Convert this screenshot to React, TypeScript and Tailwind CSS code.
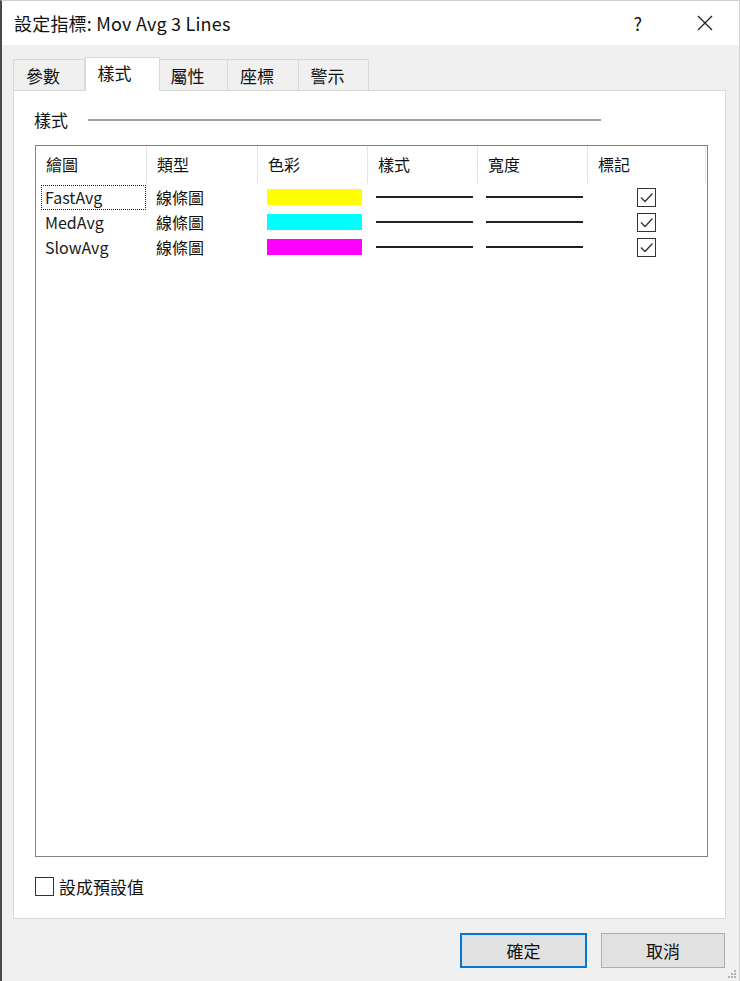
const FONT = "font-['Noto_Sans_CJK_TC','Noto_Sans',sans-serif]";

type Row = { name: string; kind: string; color: string; focused?: boolean };

const rows: Row[] = [
  { name: "FastAvg", kind: "線條圖", color: "bg-[#ffff00]", focused: true },
  { name: "MedAvg", kind: "線條圖", color: "bg-[#00ffff]" },
  { name: "SlowAvg", kind: "線條圖", color: "bg-[#ff00ff]" },
];

const tabs = [
  { label: "參數", w: "w-[72px]" },
  { label: "樣式", w: "w-[75px]", active: true },
  { label: "屬性", w: "w-[69px]" },
  { label: "座標", w: "w-[72px]" },
  { label: "警示", w: "w-[71px]" },
];

const headers = [
  { label: "繪圖", w: "w-[111px]" },
  { label: "類型", w: "w-[111px]" },
  { label: "色彩", w: "w-[110px]" },
  { label: "樣式", w: "w-[110px]" },
  { label: "寬度", w: "w-[110px]" },
  { label: "標記", w: "w-[118px]" },
];

function CheckBox({ checked }: { checked: boolean }) {
  return (
    <span className="flex h-[19px] w-[19px] items-center justify-center border border-[#333] bg-white">
      {checked ? (
        <svg width="15" height="15" viewBox="0 0 15 15" fill="none">
          <path d="M2 7.5 L6 11.5 L13.5 3.5" stroke="#333" strokeWidth="1.3" />
        </svg>
      ) : null}
    </span>
  );
}

export default function App() {
  return (
    <div
      className={`flex h-[981px] w-[740px] flex-col border-l-2 border-t border-r border-l-[#4a4a4a] border-t-[#d0d0d0] border-r-[#d0d0d0] bg-[#f0f0f0] text-[#111] ${FONT}`}
    >
      {/* title bar */}
      <div className="flex h-[44px] shrink-0 items-center bg-white pl-[12px]">
        <span className="text-[18px] tracking-[0.2px]">設定指標: Mov Avg 3 Lines</span>
        <span className="ml-auto mr-[55px] text-[18px]">?</span>
        <svg width="16" height="16" viewBox="0 0 16 16" className="mr-[26px]">
          <path d="M1 1 L15 15 M15 1 L1 15" stroke="#222" strokeWidth="1.3" />
        </svg>
      </div>

      {/* tabs */}
      <div className="ml-[11px] mt-[12px] flex h-[33px] items-end">
        {tabs.map((t) =>
          t.active ? (
            <div
              key={t.label}
              className={`relative z-10 -mb-px flex h-[34px] ${t.w} items-start justify-center border border-b-0 border-[#d9d9d9] bg-white pt-[2px] text-[17px]`}
            >
              <span className="-ml-[16px]">{t.label}</span>
            </div>
          ) : (
            <div
              key={t.label}
              className={`-ml-px flex h-[31px] ${t.w} items-center justify-center border border-b-0 border-[#d9d9d9] bg-[#f0f0f0] pt-[2px] text-[17px] first:ml-0`}
            >
              <span className="-ml-[12px]">{t.label}</span>
            </div>
          ),
        )}
      </div>

      {/* tab pane */}
      <div className="ml-[11px] flex h-[829px] w-[713px] flex-col border border-[#d9d9d9] bg-white">
        <div className="ml-[20px] mt-[16px] flex items-center">
          <span className="text-[17px]">樣式</span>
          <span className="ml-[20px] h-[2px] w-[513px] bg-[#a0a0a0]" />
        </div>

        {/* list */}
        <div className="ml-[21px] mt-[12px] flex h-[712px] w-[673px] flex-col border border-[#828282] bg-white">
          <div className="flex h-[37px]">
            {headers.map((h) => (
              <div
                key={h.label}
                className={`${h.w} flex items-center border-r border-[#e5e5e5] pl-[10px] text-[16px]`}
              >
                {h.label}
              </div>
            ))}
          </div>
          <div className="mt-[2px] flex flex-col">
            {rows.map((r) => (
              <div key={r.name} className="flex h-[25px] items-center">
                <div className="w-[111px] pl-[5px]">
                  <div
                    className={`flex h-[25px] w-[105px] items-center pl-[3px] text-[16px] text-[#1a1a1a] ${
                      r.focused ? "border border-dotted border-[#222]" : "border border-transparent"
                    }`}
                  >
                    {r.name}
                  </div>
                </div>
                <div className="w-[111px] pl-[9px] text-[16px]">{r.kind}</div>
                <div className="w-[110px] pl-[9px]">
                  <div className={`h-[16px] w-[95px] ${r.color}`} />
                </div>
                <div className="w-[110px] pl-[8px]">
                  <div className="h-[2px] w-[97px] bg-[#222]" />
                </div>
                <div className="w-[110px] pl-[8px]">
                  <div className="h-[2px] w-[97px] bg-[#222]" />
                </div>
                <div className="flex w-[118px] justify-center pr-[2px]">
                  <CheckBox checked />
                </div>
              </div>
            ))}
          </div>
        </div>

        <div className="ml-[21px] mt-[17px] flex items-center gap-[5px]">
          <CheckBox checked={false} />
          <span className="text-[17px]">設成預設值</span>
        </div>
      </div>

      {/* buttons */}
      <div className="mt-[14px] flex">
        <button className="ml-[458px] flex h-[35px] w-[127px] items-center justify-center border-2 border-[#0078d7] bg-[#e1e1e1] text-[17px]">
          確定
        </button>
        <button className="ml-[14px] flex h-[35px] w-[124px] items-center justify-center border border-[#adadad] bg-[#e1e1e1] text-[17px]">
          取消
        </button>
      </div>
      <div className="mr-[2px] mt-auto mb-[2px] flex justify-end">
        <svg width="10" height="10" viewBox="0 0 10 10">
          <g fill="#b0b0b0">
            <rect x="7" y="1" width="2" height="2" />
            <rect x="4" y="4" width="2" height="2" />
            <rect x="7" y="4" width="2" height="2" />
            <rect x="1" y="7" width="2" height="2" />
            <rect x="4" y="7" width="2" height="2" />
            <rect x="7" y="7" width="2" height="2" />
          </g>
        </svg>
      </div>
    </div>
  );
}
